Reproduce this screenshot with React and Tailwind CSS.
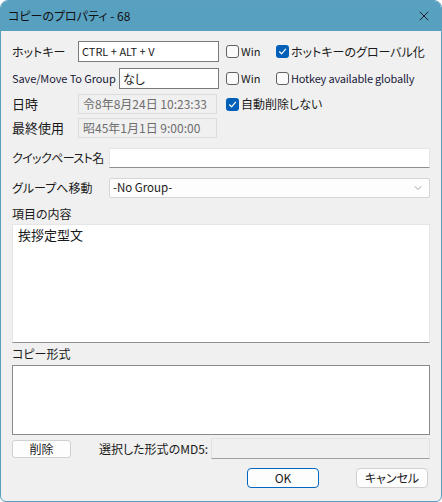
import { ChevronDown, X } from 'lucide-react';

const font = { fontFamily: '"Noto Sans CJK JP", "Noto Sans", sans-serif', fontFeatureSettings: '"palt"' };

// Small Win11-style checkbox with label
function Check({ checked, label, className = '', labelClass = 'text-[12px]' }) {
  return (
    <div className={`flex items-center shrink-0 whitespace-nowrap ${className}`}>
      {checked ? (
        <span className="w-[13px] h-[13px] shrink-0 rounded-[3px] bg-[#005fb8] flex items-center justify-center">
          <svg width="9" height="9" viewBox="0 0 9 9" fill="none">
            <path d="M1.5 4.8 L3.6 6.8 L7.6 2.2" stroke="white" strokeWidth="1.2" strokeLinecap="round" strokeLinejoin="round" />
          </svg>
        </span>
      ) : (
        <span className="w-[13px] h-[13px] shrink-0 rounded-[3px] border border-[#606060] bg-[#fafafa]" />
      )}
      <span className={`ml-[2px] text-[#1a1a1a] leading-none ${labelClass}`}>{label}</span>
    </div>
  );
}

export default function App() {
  return (
    <div style={font} className="w-[442px] h-[502px] bg-[#f0f0f0] border border-[#5a9fbe] rounded-t-[8px] rounded-b-[6px] overflow-hidden flex flex-col text-[12px] text-[#1a1a1a] whitespace-nowrap">
      {/* title bar */}
      <div className="h-[30px] shrink-0 bg-[#58a0bf] flex items-center justify-between pl-[7px] pr-[7px]">
        <span className="text-[12px] text-[#111]">コピーのプロパティ - 68</span>
        <X size={16} strokeWidth={1.3} className="text-[#111] mr-[2px]" />
      </div>

      <div className="flex-1 flex flex-col pl-[11px] pr-[10px] pt-[10px]">
        {/* hotkey */}
        <div className="flex items-center h-[21px]">
          <span className="w-[66px] shrink-0">ホットキー</span>
          <div className="w-[141px] shrink-0 h-[21px] bg-white border border-[#7a7a7a] flex items-center px-[3px] text-[11px] leading-none">CTRL + ALT + V</div>
          <Check label="Win" labelClass="text-[11px]" className="ml-[7px] w-[50px]" />
          <Check checked label="ホットキーのグローバル化" />
        </div>

        {/* save/move group hotkey */}
        <div className="flex items-center h-[21px] mt-[6px]">
          <span className="w-[107px] shrink-0 text-[11px] tracking-[-0.1px] text-[#1a1a3a]">Save/Move To Group</span>
          <div className="w-[100px] shrink-0 h-[21px] bg-white border border-[#7a7a7a] flex items-center px-[3px] leading-none">なし</div>
          <Check label="Win" labelClass="text-[11px]" className="ml-[7px] w-[50px]" />
          <Check label="Hotkey available globally" labelClass="text-[11px] tracking-[-0.2px] text-[#1a1a3a]" />
        </div>

        {/* date */}
        <div className="flex items-center h-[20px] mt-[5px]">
          <span className="w-[66px] shrink-0 text-[13px]">日時</span>
          <div className="w-[139px] shrink-0 h-[20px] bg-[#f0f0f0] border border-[#dcdcdc] flex items-center px-[4px] text-[#6d6d6d] leading-none">令8年8月24日 10:23:33</div>
          <Check checked label="自動削除しない" className="ml-[9px]" />
        </div>

        <div className="flex items-center h-[20px] mt-[4px]">
          <span className="w-[66px] shrink-0 text-[13px]">最終使用</span>
          <div className="w-[139px] shrink-0 h-[20px] bg-[#f0f0f0] border border-[#dcdcdc] flex items-center px-[4px] text-[#6d6d6d] leading-none">昭45年1月1日 9:00:00</div>
        </div>

        {/* quick paste */}
        <div className="flex items-center h-[20px] mt-[10px]">
          <span className="w-[97px] shrink-0 tracking-[-0.6px]">クイックペースト名</span>
          <div className="w-[321px] shrink-0 h-[20px] bg-white border border-[#e6e6e6] border-b-[#8f8f8f]" />
        </div>

        {/* group select */}
        <div className="flex items-center h-[20px] mt-[10px]">
          <span className="w-[97px] shrink-0">グループへ移動</span>
          <div className="w-[321px] shrink-0 h-[20px] bg-[#fdfdfd] border border-[#d6d6d6] rounded-[2px] flex items-center justify-between pl-[3px] pr-[5px] text-[11.5px] leading-none">
            <span>-No Group-</span>
            <ChevronDown size={12} strokeWidth={1.2} className="text-[#666]" />
          </div>
        </div>

        <div className="mt-[7px] h-[18px] flex items-center">項目の内容</div>
        <div className="mt-[1px] w-[418px] h-[119px] shrink-0 bg-white border border-[#e6e6e6] border-b-[#8f8f8f] px-[5px] pt-[2px] text-[13px] leading-tight">挨拶定型文</div>

        <div className="mt-[2px] h-[18px] flex items-center">コピー形式</div>
        <div className="mt-[2px] w-[418px] h-[70px] shrink-0 bg-white border border-[#8a8a8a]" />

        {/* md5 row */}
        <div className="flex items-center h-[21px] mt-[3px]">
          <button className="w-[59px] shrink-0 h-[18px] bg-[#fdfdfd] border border-[#d0d0d0] rounded-[3px] text-[12px] leading-none">削除</button>
          <span className="ml-[28px] w-[112px] shrink-0">選択した形式のMD5:</span>
          <div className="w-[219px] shrink-0 h-[21px] bg-[#f0f0f0] border border-[#e2e2e2] border-b-[#a0a0a0]" />
        </div>

        {/* dialog buttons */}
        <div className="flex items-center mt-[9px]">
          <button className="ml-[235px] w-[72px] shrink-0 h-[20px] bg-[#fdfdfd] border border-[#0067c0] rounded-[4px] text-[12px] leading-none">OK</button>
          <button className="ml-[37px] w-[72px] shrink-0 h-[20px] bg-[#fdfdfd] border border-[#d0d0d0] rounded-[4px] text-[12px] leading-none">キャンセル</button>
        </div>
      </div>
    </div>
  );
}
